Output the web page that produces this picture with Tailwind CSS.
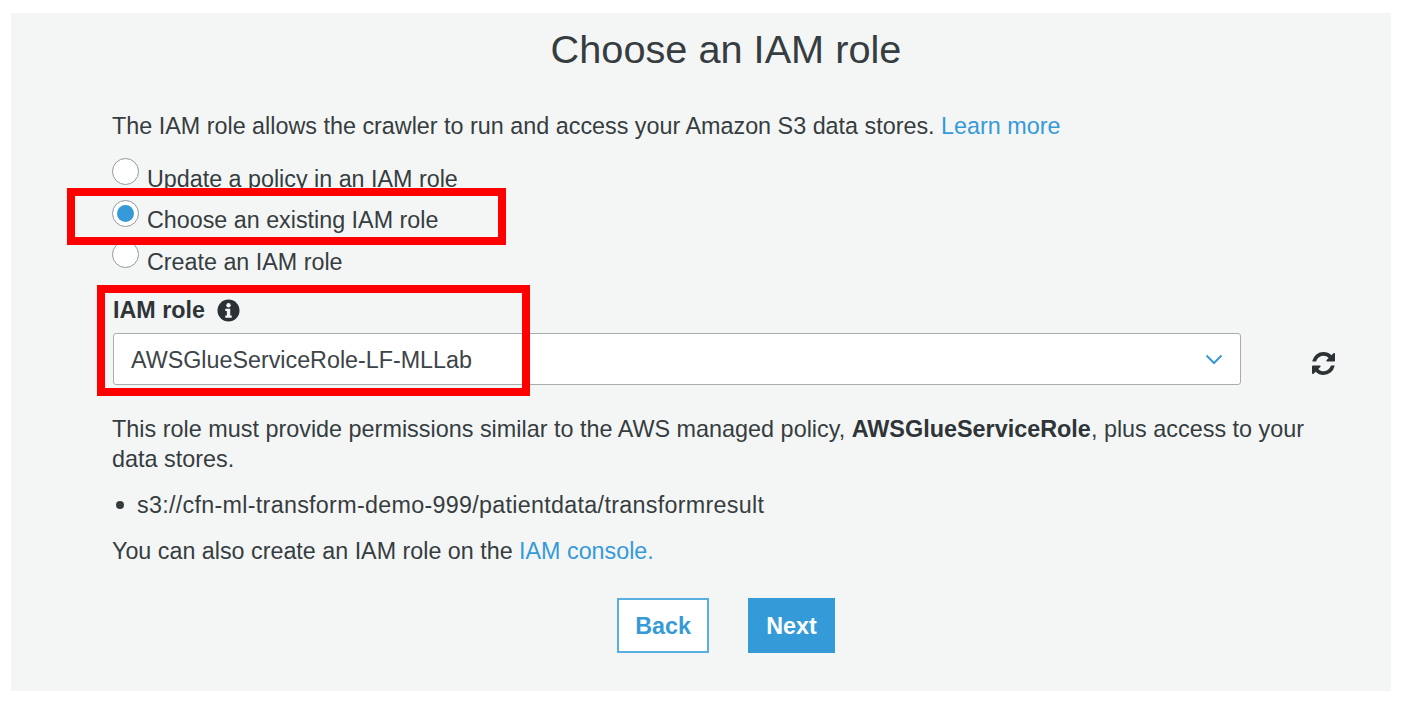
<!DOCTYPE html>
<html>
<head>
<meta charset="utf-8">
<script src="https://cdn.jsdelivr.net/npm/@tailwindcss/browser@4"></script>
</head>
<body class="bg-white w-[1406px] h-[702px] overflow-hidden font-['Liberation_Sans',Arial,sans-serif] text-[#363d40]">
<div class="relative ml-[11px] mt-[13px] w-[1380px] h-[678px] bg-[#f4f6f6] pl-[101px] pr-[55px] text-[23.3px] leading-[30px]">
  <h1 class="text-center text-[39.7px] leading-[44px] pt-[14px] pl-[4px] h-[58px] text-[#363d40] font-normal">Choose an IAM role</h1>
  <p class="mt-[40px] whitespace-nowrap text-[23.35px]">The IAM role allows the crawler to run and access your Amazon S3 data stores. <a class="text-[#379ad8]">Learn more</a></p>
  <div class="mt-[23px] flex flex-col gap-[11.5px]">
    <label class="flex h-[30px] gap-[8px]"><span class="mt-[-6px] w-[27px] h-[27px] rounded-full bg-white border border-[#8f9a9f]"></span><span>Update a policy in an IAM role</span></label>
    <label class="flex h-[30px] gap-[8px]"><span class="mt-[-6px] w-[27px] h-[27px] rounded-full bg-white border border-[#8f9a9f] flex items-center justify-center"><span class="w-[17px] h-[17px] rounded-full bg-[#379ad8]"></span></span><span class="mt-[-1px]">Choose an existing IAM role</span></label>
    <label class="flex h-[30px] gap-[8px]"><span class="mt-[-6px] w-[27px] h-[27px] rounded-full bg-white border border-[#8f9a9f]"></span><span>Create an IAM role</span></label>
  </div>
  <div class="mt-[18px] pl-[1px] flex items-center gap-[12px] h-[30px] font-bold text-[23.3px] text-[#2e3437]">IAM role
    <svg class="w-[23px] h-[23px]" viewBox="0 0 24 24"><circle cx="12" cy="12" r="11.5" fill="#2b3134"/><circle cx="12" cy="6.6" r="2.3" fill="#f4f6f6"/><path d="M8.6 10.2h5.2v7h1.6v2.4H8.6v-2.4h1.7v-4.6H8.6z" fill="#f4f6f6"/></svg>
  </div>
  <div class="mt-[8px] flex items-center">
    <div class="w-[1128px] h-[52px] ml-[1px] bg-white border-[1.5px] border-[#a6aeb2] rounded-[3px] flex items-center justify-between pl-[17px] pr-[17px]">
      <span class="text-[#3d4447] pt-[1px]">AWSGlueServiceRole-LF-MLLab</span>
      <svg class="w-[18px] h-[11px]" viewBox="0 0 18 11" fill="none"><path d="M1.5 1.5L9 9l7.5-7.5" stroke="#379ad8" stroke-width="2"/></svg>
    </div>
    <svg class="ml-[71px] mt-[8px] w-[23px] h-[23px]" viewBox="0 0 1536 1536"><path fill="#2b3134" d="M1511 928q0 5-1 7-64 268-268 434.500t-478 166.500q-146 0-282.500-55t-243.500-157l-129 129q-19 19-45 19t-45-19-19-45v-448q0-26 19-45t45-19h448q26 0 45 19t19 45-19 45l-137 137q71 66 161 102t187 36q134 0 250-65t186-179q11-17 53-117 8-23 30-23h192q13 0 22.500 9.500t9.500 22.500zM1536 128v448q0 26-19 45t-45 19h-448q-26 0-45-19t-19-45 19-45l138-138q-148-137-349-137-134 0-250 65t-186 179q-11 17-53 117-8 23-30 23h-199q-13 0-22.500-9.500t-9.500-22.500v-7q65-268 270-434.500t480-166.500q146 0 284 55.500t245 156.500l130-129q19-19 45-19t45 19 19 45z"/></svg>
  </div>
  <p class="mt-[29px] w-[1215px] text-[23.4px]">This role must provide permissions similar to the AWS managed policy, <b class="text-[#2e3437]">AWSGlueServiceRole</b>, plus access to your data stores.</p>
  <ul class="mt-[16px] flex items-center gap-[13px] h-[30px] tracking-[0.3px]"><li class="w-[8px] h-[8px] ml-[4px] rounded-full bg-[#333b3e]"></li><li>s3://cfn-ml-transform-demo-999/patientdata/transformresult</li></ul>
  <p class="mt-[16px]">You can also create an IAM role on the <a class="text-[#379ad8]">IAM console.</a></p>
  <div class="mt-[32px] ml-[505px] flex gap-[39px] font-bold">
    <button class="w-[92px] h-[55px] bg-white border-2 border-[#5aaee0] text-[#379ad8]">Back</button>
    <button class="w-[87px] h-[55px] bg-[#359bd8] text-white">Next</button>
  </div>
  <div class="absolute left-[56px] top-[175px] w-[439px] h-[57px] border-[8px] border-[#ff0000]"></div>
  <div class="absolute left-[86px] top-[272px] w-[433px] h-[111px] border-[8px] border-[#ff0000]"></div>
</div>
</body>
</html>
